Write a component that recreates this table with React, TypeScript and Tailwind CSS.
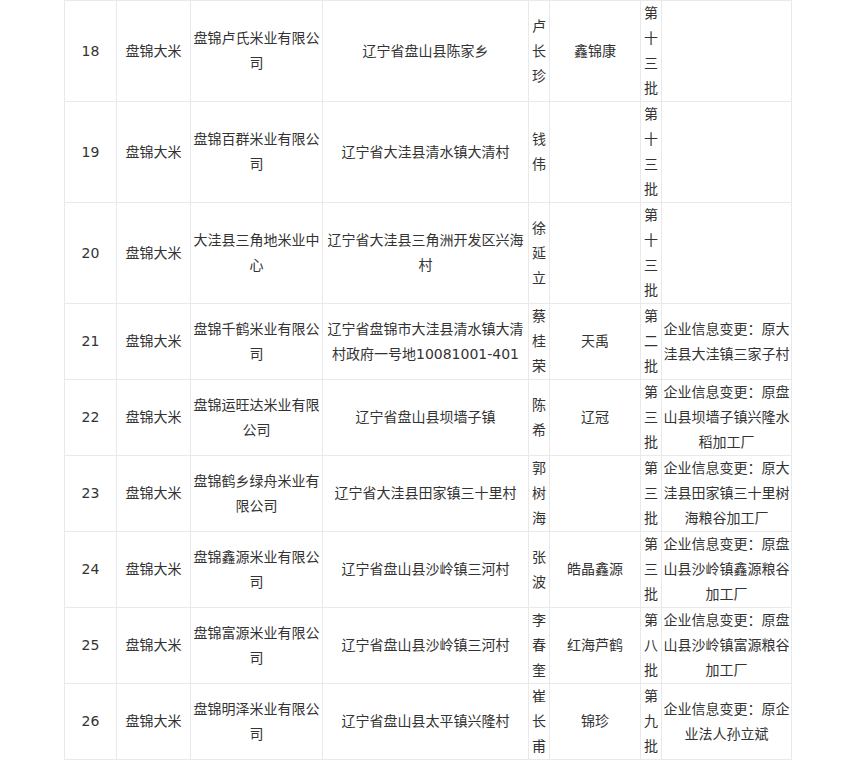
const rows = [
  { no: '18', company: '盘锦卢氏米业有限公司', addr: '辽宁省盘山县陈家乡', person: '卢长珍', brand: '鑫锦康', batch: '第十三批', note: '' },
  { no: '19', company: '盘锦百群米业有限公司', addr: '辽宁省大洼县清水镇大清村', person: '钱伟', brand: '', batch: '第十三批', note: '' },
  { no: '20', company: '大洼县三角地米业中心', addr: '辽宁省大洼县三角洲开发区兴海村', person: '徐延立', brand: '', batch: '第十三批', note: '' },
  { no: '21', company: '盘锦千鹤米业有限公司', addr: '辽宁省盘锦市大洼县清水镇大清村政府一号地10081001-401', person: '蔡桂荣', brand: '天禹', batch: '第二批', note: '企业信息变更：原大洼县大洼镇三家子村' },
  { no: '22', company: '盘锦运旺达米业有限公司', addr: '辽宁省盘山县坝墙子镇', person: '陈希', brand: '辽冠', batch: '第三批', note: '企业信息变更：原盘山县坝墙子镇兴隆水稻加工厂' },
  { no: '23', company: '盘锦鹤乡绿舟米业有限公司', addr: '辽宁省大洼县田家镇三十里村', person: '郭树海', brand: '', batch: '第三批', note: '企业信息变更：原大洼县田家镇三十里树海粮谷加工厂' },
  { no: '24', company: '盘锦鑫源米业有限公司', addr: '辽宁省盘山县沙岭镇三河村', person: '张波', brand: '皓晶鑫源', batch: '第三批', note: '企业信息变更：原盘山县沙岭镇鑫源粮谷加工厂' },
  { no: '25', company: '盘锦富源米业有限公司', addr: '辽宁省盘山县沙岭镇三河村', person: '李春奎', brand: '红海芦鹤', batch: '第八批', note: '企业信息变更：原盘山县沙岭镇富源粮谷加工厂' },
  { no: '26', company: '盘锦明泽米业有限公司', addr: '辽宁省盘山县太平镇兴隆村', person: '崔长甫', brand: '锦珍', batch: '第九批', note: '企业信息变更：原企业法人孙立斌' },
];

const cell = 'border border-[#e9e9e9] px-[1px] py-0 text-center align-middle';

export default function App() {
  return (
    <div className="w-[852px] h-[760px] overflow-hidden bg-white pl-[64px]">
      <table
        className="table-fixed border-collapse w-[727px] text-[14px] leading-[25px] text-[#333333]"
        style={{ fontFamily: '"DejaVu Sans", "Noto Sans CJK SC", sans-serif' }}
      >
        <colgroup>
          <col className="w-[52px]" />
          <col className="w-[74px]" />
          <col className="w-[132px]" />
          <col className="w-[206px]" />
          <col className="w-[21px]" />
          <col className="w-[91px]" />
          <col className="w-[21px]" />
          <col className="w-[130px]" />
        </colgroup>
        <tbody>
          {rows.map((r) => (
            <tr key={r.no}>
              <td className={cell}>{r.no}</td>
              <td className={cell}>盘锦大米</td>
              <td className={cell}>{r.company}</td>
              <td className={cell}>{r.addr}</td>
              <td className={cell}>{r.person}</td>
              <td className={cell}>{r.brand}</td>
              <td className={cell}>{r.batch}</td>
              <td className={cell}>{r.note}</td>
            </tr>
          ))}
        </tbody>
      </table>
    </div>
  );
}
